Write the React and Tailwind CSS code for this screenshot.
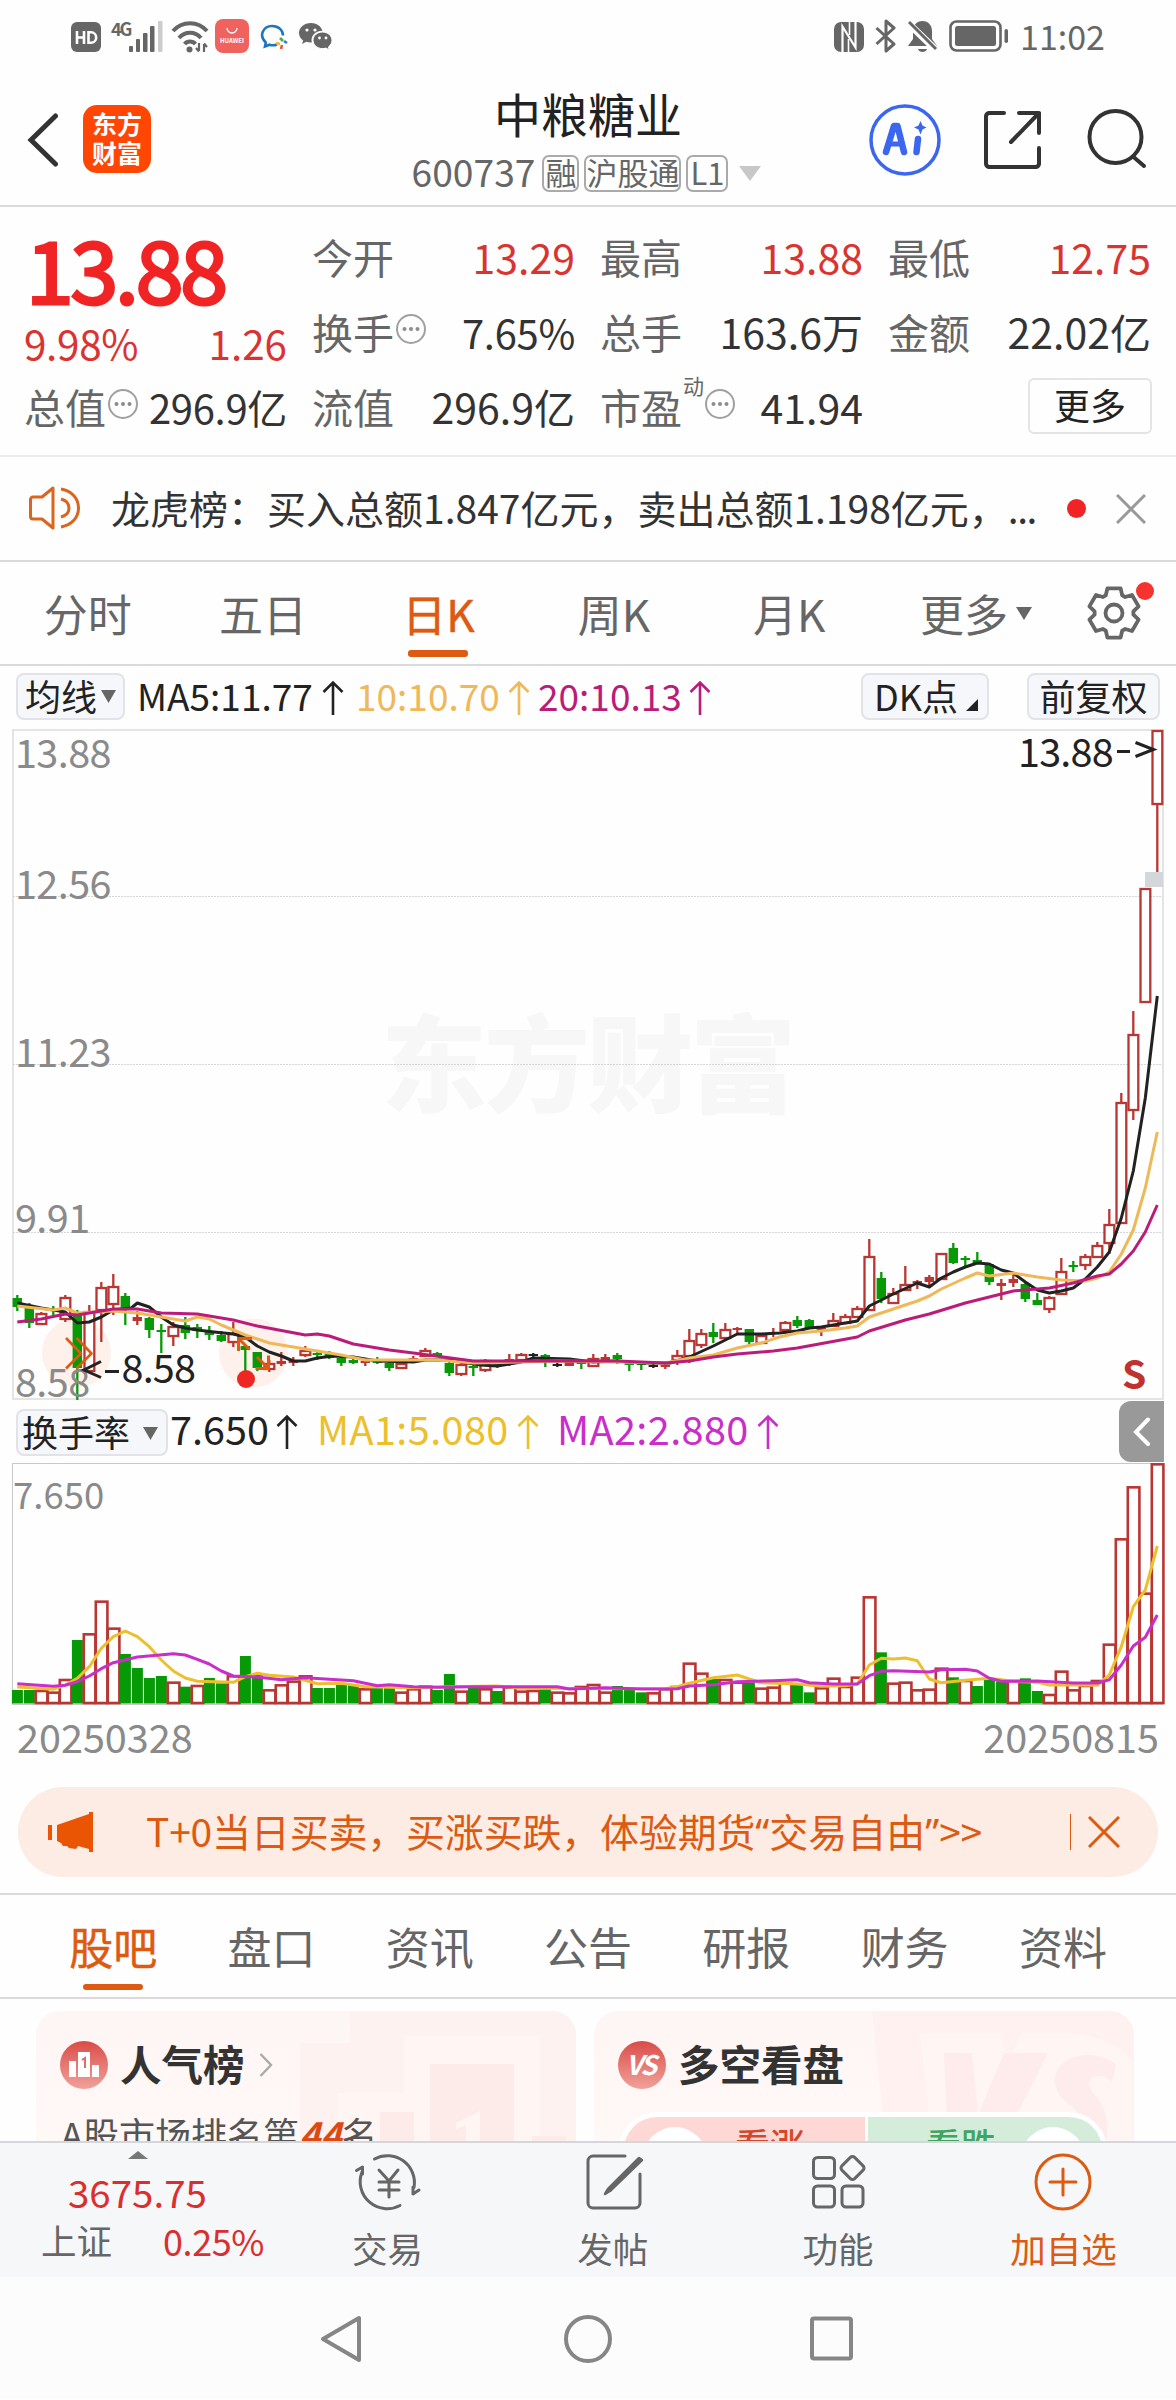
import React from "react";

const RED = "#b93632";
const GREEN = "#069a06";
const INK = "#222222";

/* ---------- price series: [kind, high, bodyTop, bodyBottom, low] ---------- */
/* kinds: g = falling, r = rising (hollow), f = rising (filled), k = unchanged */
const CANDLES = [
  ["g",1295,1298,1307,1311],["g",1303,1307,1323,1328],["r",1312,1313,1324,1325],["g",1306,1309,1311,1317],["r",1295,1297,1319,1322],
  ["g",1310,1315,1368,1400],["r",1305,1311,1371,1371],["r",1282,1287,1310,1342],["r",1274,1286,1304,1315],["g",1293,1296,1309,1325],
  ["f",1311,1317,1321,1325],["g",1317,1318,1330,1338],["g",1324,1330,1332,1353],["r",1322,1326,1336,1346],["g",1317,1325,1333,1339],
  ["g",1324,1327,1331,1338],["g",1326,1332,1335,1340],["g",1331,1335,1341,1342],["r",1322,1333,1342,1347],["g",1346,1346,1350,1377],
  ["g",1352,1352,1368,1371],["r",1360,1363,1369,1372],["f",1352,1361,1364,1366],["f",1357,1360,1363,1366],["r",1346,1350,1355,1357],
  ["g",1352,1353,1355,1360],["g",1351,1354,1358,1359],["g",1355,1358,1363,1366],["g",1357,1360,1363,1364],["f",1358,1361,1363,1366],
  ["g",1357,1359,1363,1364],["g",1362,1363,1368,1371],["r",1362,1363,1368,1369],["f",1356,1358,1360,1362],["r",1348,1350,1356,1357],
  ["g",1352,1353,1357,1357],["g",1362,1363,1373,1376],["r",1363,1364,1374,1376],["g",1363,1366,1368,1376],["r",1359,1360,1370,1372],
  ["g",1363,1364,1366,1368],["f",1354,1359,1361,1366],["r",1353,1354,1360,1360],["k",1353,1354,1355,1358],["g",1354,1355,1360,1367],
  ["k",1363,1364,1366,1367],["f",1362,1362,1366,1366],["g",1362,1362,1364,1369],["r",1354,1358,1366,1367],["f",1354,1357,1360,1361],
  ["g",1353,1355,1359,1364],["g",1363,1363,1365,1371],["g",1363,1363,1365,1370],["k",1364,1365,1367,1368],["f",1364,1365,1367,1369],
  ["r",1350,1355,1360,1365],["r",1329,1340,1356,1363],["r",1329,1333,1345,1348],["g",1323,1332,1337,1343],["r",1323,1329,1338,1339],
  ["f",1327,1328,1330,1333],["g",1329,1329,1342,1345],["r",1334,1335,1343,1343],["f",1328,1332,1334,1337],["r",1321,1322,1330,1331],
  ["g",1316,1320,1326,1328],["g",1319,1320,1328,1328],["f",1327,1328,1330,1336],["r",1313,1320,1326,1327],["r",1314,1316,1323,1324],
  ["r",1306,1308,1317,1317],["r",1239,1256,1310,1311],["g",1272,1278,1299,1303],["r",1288,1293,1303,1304],["r",1266,1284,1290,1290],
  ["f",1280,1281,1283,1289],["f",1275,1277,1282,1286],["r",1253,1253,1279,1279],["g",1243,1248,1263,1264],["g",1256,1258,1260,1266],
  ["g",1252,1260,1263,1263],["g",1263,1264,1282,1285],["f",1279,1283,1286,1300],["f",1275,1279,1283,1287],["g",1283,1284,1299,1302],
  ["g",1293,1300,1305,1305],["r",1296,1297,1309,1313],["r",1258,1271,1294,1295],["g",1261,1265,1267,1272],["r",1254,1256,1265,1270],
  ["r",1242,1245,1257,1258],["r",1209,1224,1243,1254],["r",1093,1102,1223,1223],["r",1011,1034,1110,1120],["r",888,888,1002,1002],
  ["r",730,730,804,872],
];

const MA5 = [[0,1303],[2,1308],[3,1310],[4,1312],[5,1323],[6,1322],[7,1317],[8,1310],[9.5,1308],[10,1303],[11,1307],[12,1317],[13,1325],[14,1328],[15,1330],[16.4,1332],[18,1334],[19,1337],[20,1346],[21,1352],[22,1356],[23,1361],[24,1361],[25,1358],[26.3,1356],[28,1357],[30,1361],[33,1362],[34,1360],[36,1360],[37,1362],[38.6,1365],[40,1366],[42,1362],[43,1358],[46,1359],[48,1362],[50,1361],[52,1363],[54.4,1363],[56,1357],[58,1346],[60,1334],[62,1334],[63.5,1333],[65,1331],[66,1328],[67,1327],[68,1325],[69,1323],[70,1321],[71,1306],[73,1294],[75,1283],[76,1287],[77,1278],[78,1272],[79,1267],[80,1263],[81,1264],[82,1270],[83,1273],[84,1282],[85,1290],[86,1293],[87,1291],[88,1288],[89,1279],[90,1267],[91,1252],[92,1218],[93,1171],[94,1098],[95,996]];
const MA10 = [[0,1306],[3,1310],[4,1308],[5,1313],[8,1311],[10,1313],[12,1317],[14,1321],[15,1317],[16,1319],[17,1325],[19,1335],[21,1343],[23,1347],[25,1351],[27,1355],[29,1360],[35,1360],[38,1363],[42,1362],[45,1361],[50,1362],[54,1363],[56,1358],[58,1355],[60,1348],[62,1343],[63.5,1337],[65,1333],[67,1331],[69,1328],[70,1326],[71,1317],[73,1309],[75,1301],[76,1296],[77,1289],[79,1278],[80,1273],[81,1276],[83,1273],[85,1277],[87,1280],[89,1281],[90,1278],[91,1272],[92,1254],[93,1230],[94,1188],[95,1132]];
const MA20 = [[0,1322],[2,1319],[4,1314],[5,1315],[7,1311],[8,1309],[10,1309],[12,1313],[15,1314],[18,1320],[20,1326],[24,1335],[25,1334],[26,1336],[28,1344],[31,1350],[33,1353],[38,1361],[50,1361],[54,1363],[56,1361],[58,1357],[60,1354],[63,1351],[65,1348],[70,1337],[71,1331],[74,1320],[76,1314],[79,1303],[81,1297],[83,1291],[86,1288],[88,1283],[90,1276],[91,1274],[92,1264],[93,1251],[94,1232],[95,1205]];

/* ---------- turnover series, y in thirds of a pixel ---------- */
const BARS = "g750 g750 r750 r755 r717 g600 r580 r482 r563 g642 g684 g714 g708 r725 g740 r735 g714 g730 r706 g648 g705 r748 r733 r722 r706 g744 g744 g735 g735 r745 g742 g742 r755 r745 r737 g750 g702 r752 g742 r745 g753 r740 r752 r750 g738 r755 r757 r738 r732 r755 g738 g748 g757 r757 r745 r738 r668 r698 g717 r717 r725 g727 r743 r740 r728 g730 g757 r742 r713 r738 r710 r469 g637 r728 r725 r748 r746 r683 g712 r720 g738 g715 g725 r720 g715 g753 r762 r692 r748 r735 r720 r611 r295 r139 r458 r70"
  .split(" ")
  .map((s) => [s[0], Number(s.slice(1)) / 3 + 1440]);
const VMA1 = [[0,741],[3,748],[4,735],[5,715],[6,680],[7,625],[8,590],[9,573],[10,590],[11,620],[12,660],[13,693],[14,714],[15,724],[18,727],[19,710],[20,700],[21,706],[23,711],[25,731],[27,730],[29,740],[33,743],[36,740],[40,738],[42,745],[54,746],[55,740],[56,730],[58,713],[60,705],[61,717],[62,728],[65,732],[67,739],[69,737],[70,732],[71,675],[72,655],[73,657],[74,654],[75,662],[76,717],[77,728],[79,721],[81,715],[83,724],[85,727],[86,735],[88,735],[90,736],[91,705],[92,620],[93,500],[94,450],[95,318]];
const VMA2 = [[0,731],[3,739],[4,736],[5,725],[6,708],[7,686],[8,668],[10,651],[13,641],[14,645],[15,658],[16,672],[17,693],[18,708],[20,711],[22,719],[24,713],[26,718],[28,722],[30,737],[31,734],[33,740],[35,742],[38,740],[45,740],[46,747],[49,743],[52,747],[55,746],[56,738],[58,734],[60,725],[63,722],[65,719],[66,728],[68,732],[70,732],[71,707],[72,694],[73,692],[76,696],[77,689],[79,688],[80,693],[81,715],[82,724],[85,723],[88,729],[90,729],[91,719],[92,675],[93,618],[94,592],[95,525]];

const cx = (i) => 17.3 + 12 * i;
const line = (pts) => pts.map(([i, y]) => `${cx(i).toFixed(1)},${y}`).join(" ");
const vline = (pts) => line(pts.map(([i, v]) => [i, (1440 + v / 3).toFixed(1)]));

function PriceChart() {
  return (
    <svg width="1176" height="672" viewBox="0 729 1176 672" className="block shrink-0">
      <rect x="13" y="730" width="1150" height="669" fill="none" stroke="#e4e4e4" strokeWidth="2" />
      <text x="381" y="1104" fontSize="106" fontWeight="900" fill="#f7f7f7" textLength="415">东方财富</text>
      {[896.5, 1064.5, 1232.5].map((y) => (
        <line key={y} x1="13" x2="1163" y1={y} y2={y} stroke="#d6d6d6" strokeWidth="1" strokeDasharray="2 1" />
      ))}
      <circle cx="76.500" cy="1353" r="34.500" fill="#fef0ea" />
      <circle cx="253.500" cy="1353" r="34.500" fill="#fef0ea" />
      {CANDLES.map(([k, hi, t, b, lo], i) => {
        const x = cx(i);
        const c = k === "g" ? GREEN : k === "k" ? INK : RED;
        const hollow = k === "r" && b - t > 3;
        return (
          <g key={i}>
            {hi < t && <line x1={x} x2={x} y1={hi} y2={t} stroke={c} strokeWidth="2.300" />}
            {lo > b && <line x1={x} x2={x} y1={b} y2={lo} stroke={c} strokeWidth="2.300" />}
            {hollow ? (
              <rect x={x - 4.8} y={t + 1} width="9.800" height={b - t - 1} fill="#fff" stroke={c} strokeWidth="2.300" />
            ) : (
              <rect x={x - 4.7} y={t} width="9.400" height={Math.max(b - t, 2)} fill={c} />
            )}
          </g>
        );
      })}
      <rect x="1145" y="872" width="18" height="15" fill="#d3d7dc" />
      <g fill="none" strokeWidth="3" strokeLinejoin="round">
        <polyline points={line(MA5)} stroke={INK} />
        <polyline points={line(MA10)} stroke="#efb858" />
        <polyline points={line(MA20)} stroke="#bb1c79" />
        <g stroke="#dd5a12" strokeWidth="2.600">
          <path d="M66 1338l15 15.500-15 15M76.500 1338l15 15.500-15 15" />
          <path d="M249.500 1349.500L239 1339M238.500 1351v-12.500h13.500M257 1357l11 11M268.500 1355.500v13h-13" strokeWidth="3" />
        </g>
      </g>
      <circle cx="246" cy="1379" r="9" fill="#ee2722" />
      <g fontSize="39.600" fill="#8a8a8a" letterSpacing="-0.600">
        <text x="15" y="768">13.88</text>
        <text x="15" y="899">12.56</text>
        <text x="15" y="1067">11.23</text>
        <text x="15" y="1233">9.91</text>
        <text x="15" y="1397">8.58</text>
      </g>
      <g fontSize="39.600" fill={INK} letterSpacing="-0.800">
        <text x="1018" y="767">13.88</text>
        <text x="121.500" y="1383">8.58</text>
        <path d="M1117 751.500h13M1135.500 742.500l18 7-18 7M105 1371.500h14M101 1361.500l-17 8.500 17 7.500" fill="none" stroke={INK} strokeWidth="3" />
      </g>
      <text x="1122" y="1389" fontSize="39" fontWeight="600" fill="#bf322f">S</text>
    </svg>
  );
}

function TurnoverChart() {
  return (
    <svg width="1176" height="243" viewBox="0 1463 1176 243" className="block shrink-0">
      <rect x="12.500" y="1463.500" width="1150.500" height="241" fill="none" stroke="#c9c9c9" strokeWidth="1" />
      {BARS.map(([k, y], i) =>
        k === "g" ? (
          <rect key={i} x={cx(i) - 5.4} y={y} width="11" height={1703.5 - y} fill={GREEN} />
        ) : (
          <rect key={i} x={cx(i) - 5.5} y={y + 1} width="11.600" height={1702 - y} fill="#fff" stroke={RED} strokeWidth="2.600" />
        )
      )}
      <g fill="none" strokeWidth="3" strokeLinejoin="round">
        <polyline points={vline(VMA1)} stroke="#ecc02c" />
        <polyline points={vline(VMA2)} stroke="#c92ecb" />
      </g>
      <text x="13" y="1509" fontSize="36.500" fill="#8a8a8a">7.650</text>
    </svg>
  );
}

const UpArrow = ({ className }) => (
  <svg width="22" height="36" viewBox="0 0 22 36" fill="none" stroke="currentColor" strokeWidth="2.600" className={className}>
    <path d="M11 35V3M1.500 12L11 2.500 20.500 12" />
  </svg>
);

const Down = ({ w, h, color, className }) => (
  <svg width={w} height={h} viewBox="0 0 10 10" preserveAspectRatio="none" className={className}>
    <path d="M0 0h10L5 10z" fill={color} />
  </svg>
);

const Info = ({ className }) => (
  <svg width="32" height="32" viewBox="0 0 32 32" className={className}>
    <circle cx="16" cy="16" r="14" fill="none" stroke="#a0a0a0" strokeWidth="2" />
    <g fill="#8c8c8c">
      <circle cx="9.500" cy="16" r="2" />
      <circle cx="16" cy="16" r="2" />
      <circle cx="22.500" cy="16" r="2" />
    </g>
  </svg>
);

function StatusBar() {
  return (
    <div className="flex h-[75px] items-start pl-[71px] pt-[19px] text-[#666]">
      <svg width="30" height="30" viewBox="0 0 30 30" className="mt-[3px]">
        <rect width="30" height="30" rx="6" fill="#666" />
        <path d="M6 9v13M13 9v13M6 15.500h7M17.500 10.300h2.500a5.200 5.200 0 0 1 0 10.400h-2.500z" fill="none" stroke="#fff" strokeWidth="2.600" />
      </svg>
      <div className="ml-[10px] mt-[-1px] w-[19px] text-[18px] font-bold leading-[20px] tracking-[-2px] whitespace-nowrap">4G</div>
      <svg width="34" height="31" viewBox="0 0 34 31" className="ml-[-1px] mt-[2px]">
        <g fill="#666">
          <rect x="0" y="25" width="4" height="6" rx="1" />
          <rect x="7" y="18" width="4" height="13" rx="1" />
          <rect x="14" y="12" width="4.500" height="19" rx="1" />
          <rect x="21" y="5" width="4.500" height="26" rx="1" />
          <rect x="29" y="0" width="4.500" height="31" rx="1" fill="#ccc" />
        </g>
      </svg>
      <svg width="38" height="33" viewBox="0 0 38 33" className="ml-[8px] mt-[1px]" fill="none" stroke="#666" strokeWidth="4">
        <path d="M2 11c9-10.500 25-10.500 34 0M8 18c6-7 16-7 22 0M13.500 24c3-3.500 8-3.500 11 0" />
        <circle cx="18.500" cy="29.500" r="3" fill="#666" stroke="none" />
        <path d="M28 23v8M25 28l3 3.500M33 32v-8M36 27l-3-3.500" strokeWidth="2.200" />
      </svg>
      <div className="ml-[6px] flex h-[34px] w-[34px] flex-col items-center justify-center rounded-[8px] bg-[#ef625e]">
        <svg width="12" height="8" viewBox="0 0 12 8" className="mb-[2px]" fill="none" stroke="#fff" strokeWidth="1.300"><path d="M1 1a5 5 0 0 0 10 0" /></svg>
        <span className="text-[6px] font-bold leading-[8px] text-white">HUAWEI</span>
      </div>
      <svg width="28" height="26" viewBox="0 0 28 26" className="ml-[11px] mt-[5px]" fill="none" strokeWidth="2.600">
        <path d="M17 20.500c-2 .8-5 1-7.500.2L5 22.500l.8-4C-1.500 12 3 2 12 2c7 0 11 4.500 11 9.500" stroke="#1f76bd" />
        <path d="M20 14l3 3" stroke="#45b04a" />
        <path d="M24 17l3 2" stroke="#2f80d0" />
        <path d="M21 25l1-4" stroke="#e9562f" />
        <path d="M16 19l4 1" stroke="#f4b821" />
      </svg>
      <svg width="33" height="27" viewBox="0 0 33 27" className="ml-[11px] mt-[4px]">
        <path d="M12 0C5 0 0 4.600 0 10c0 3 1.600 5.700 4.200 7.500L3 21l4.300-2.200c1.500.4 3 .6 4.700.6h.8C11.500 13 16 8 23.500 7.800 22.200 3.200 17.500 0 12 0z" fill="#666" />
        <path d="M33 17.300c0-4.700-4.300-8.300-9.500-8.300S14 12.600 14 17.300s4.300 8.300 9.500 8.300c1.200 0 2.400-.2 3.500-.5l3.300 1.900-.9-3c2.200-1.600 3.600-4 3.600-6.700z" fill="#666" stroke="#fff" strokeWidth="1" />
        <g fill="#fff"><circle cx="8" cy="7" r="1.600" /><circle cx="16" cy="7" r="1.600" /><circle cx="20.500" cy="15" r="1.400" /><circle cx="27" cy="15" r="1.400" /></g>
      </svg>
      <div className="flex-1" />
      <svg width="30" height="30" viewBox="0 0 30 30" className="mt-[3px]">
        <rect width="30" height="30" rx="7" fill="#666" />
        <path d="M8.500 30V4.500L21.500 25.500V0" fill="none" stroke="#fff" strokeWidth="2.200" />
        <path d="M14.500 30V17M15.500 0v13" fill="none" stroke="#fff" strokeWidth="1.600" />
      </svg>
      <svg width="22" height="34" viewBox="0 0 22 34" className="ml-[11px]" fill="none" stroke="#666" strokeWidth="3">
        <path d="M1.500 9L19 25l-8 7V2l8 7L1.500 25" strokeLinejoin="round" />
      </svg>
      <svg width="31" height="33" viewBox="0 0 31 33" className="ml-[10px] mt-[1px]">
        <path d="M15.500 1c6 0 9.500 4.500 9.500 10v8l5 7H1l5-7v-8c0-5.500 3.500-10 9.500-10zM11 29h9c-1 4-8 4-9 0z" fill="#666" />
        <path d="M-1 1L30 31" stroke="#fff" strokeWidth="7" />
        <path d="M2 2L29 29" stroke="#666" strokeWidth="3" />
      </svg>
      <svg width="60" height="33" viewBox="0 0 60 33" className="ml-[11px] mt-[1px]">
        <rect x="1.500" y="1.500" width="50" height="29" rx="6" fill="none" stroke="#666" strokeWidth="2.600" />
        <rect x="6" y="6" width="41" height="20" rx="2.500" fill="#666" />
        <rect x="55.500" y="9" width="3.500" height="14" rx="1.700" fill="#666" />
      </svg>
      <div className="mr-[71px] ml-[11px] text-[34px] leading-[34px] whitespace-nowrap">11:02</div>
    </div>
  );
}

const Tag = ({ children, className }) => (
  <span className={`flex h-[37px] items-center justify-center rounded-[7px] border-2 border-[#aaa] pb-[4px] text-[31px] leading-none text-[#666] ${className}`}>{children}</span>
);

function Header() {
  return (
    <header className="grid h-[132px] grid-cols-[1fr_auto_1fr] border-b-2 border-[#dadada]">
      <div className="flex items-start">
        <svg width="32" height="54" viewBox="0 0 32 54" className="ml-[27px] mt-[38px]" fill="none" stroke="#333" strokeWidth="5" strokeLinecap="round">
          <path d="M28.500 3L4 27l24.500 24" />
        </svg>
        <div className="ml-[24px] mt-[30px] flex h-[68px] w-[68px] flex-col items-center justify-center rounded-[14px] bg-[#ff4604] pb-[3px] text-[25px] font-bold leading-[29px] text-white">
          <span>东方</span>
          <span>财富</span>
        </div>
      </div>
      <div className="flex flex-col items-center">
        <h1 className="mt-[12px] text-[47px] leading-[52px] text-[#222]">中粮糖业</h1>
        <div className="mt-[16px] mr-[3px] flex h-[37px] items-center">
          <span className="mt-[-4px] text-[37.2px] leading-none text-[#666]">600737</span>
          <Tag className="ml-[7px] w-[37px]">融</Tag>
          <Tag className="ml-[5px] w-[97px]">沪股通</Tag>
          <Tag className="ml-[5px] w-[42px]">L1</Tag>
          <Down w="22" h="15" color="#c8c8c8" className="ml-[11px]" />
        </div>
      </div>
      <div className="flex items-start justify-end pr-[29px]">
        <svg width="72" height="72" viewBox="0 0 72 72" className="mt-[29px]" fill="none" stroke="#3a66f0">
          <circle cx="36" cy="36" r="34" strokeWidth="3.500" />
          <g strokeLinecap="round" strokeLinejoin="round" strokeWidth="6.500">
            <path d="M17 48L25 22h3.500L35 48" />
            <path d="M21.500 40h11" strokeWidth="5" />
            <path d="M49 35l-1.500 13" />
          </g>
          <path d="M51.500 17l2 4.500 4 2-4 2-2 5-2-5-4.500-2 4.500-2z" fill="#3a66f0" stroke="none" />
        </svg>
        <svg width="60" height="60" viewBox="0 0 60 60" className="ml-[42px] mr-[1px] mt-[35px]" fill="none" stroke="#333" strokeWidth="4" strokeLinecap="round" strokeLinejoin="round">
          <path d="M21 3H6a4 4 0 0 0-3 3v48a4 4 0 0 0 3 3h47a4 4 0 0 0 3-3V38M36 3h20v20M56 3L28 32" />
        </svg>
        <svg width="60" height="62" viewBox="0 0 60 62" className="ml-[43px] mt-[33px]" fill="none" stroke="#333" strokeWidth="4" strokeLinecap="round">
          <circle cx="28.500" cy="29" r="26" />
          <path d="M46 48.500l11 9.500" />
        </svg>
      </div>
    </header>
  );
}

const Cell = ({ label, extra, value, red, tight }) => (
  <div className="flex h-[75px] w-[263px] items-center whitespace-nowrap text-[41px] leading-none">
    <span className="text-[#666]">{label}</span>
    {extra}
    <span className={`ml-auto ${red ? "text-[#d93431]" : "text-[#333]"} ${tight ? "text-[40px] tracking-[-0.3px]" : ""}`}>{value}</span>
  </div>
);

function Stats() {
  const info = <Info className="ml-[1px] mt-[-6px]" />;
  return (
    <section className="flex h-[250px] gap-[25px] border-b-2 border-[#ececec] pl-[24px] pt-[12px]">
      <div className="w-[263px]">
        <div className="h-[96px] pl-[2px] pt-[5px] text-[86px] leading-[86px] tracking-[-3.2px] text-[#f02424] [-webkit-text-stroke:3px_#f02424]">13.88</div>
        <div className="flex h-[54px] items-center justify-between pt-[3px] text-[40.4px] leading-none text-[#d93431]">
          <span className="tracking-[-0.3px]">9.98%</span>
          <span>1.26</span>
        </div>
        <Cell label="总值" extra={info} value="296.9亿" tight />
      </div>
      <div>
        <Cell label="今开" value="13.29" red />
        <Cell label="换手" extra={info} value="7.65%" tight />
        <Cell label="流值" value="296.9亿" />
      </div>
      <div>
        <Cell label="最高" value="13.88" red />
        <Cell label="总手" value="163.6万" />
        <Cell
          label="市盈"
          extra={
            <>
              <span className="mt-[-42px] ml-[1px] text-[21px] text-[#666]">动</span>
              <Info className="mt-[-6px]" />
            </>
          }
          value="41.94"
        />
      </div>
      <div>
        <Cell label="最低" value="12.75" red />
        <Cell label="金额" value="22.02亿" />
        <div className="ml-[140px] mt-[9px] flex h-[56px] w-[124px] items-center justify-center rounded-[6px] border-2 border-[#e4e4e4] pb-[4px] text-[36px] leading-none text-[#222]">更多</div>
      </div>
    </section>
  );
}

function Notice() {
  return (
    <section className="flex h-[105px] items-center border-b-2 border-[#dadada]">
      <svg width="52" height="46" viewBox="0 0 52 46" className="ml-[29px] mt-[-1px]" fill="none" stroke="#d9661f" strokeWidth="3">
        <path d="M24 3v40L13 34H4a2.500 2.500 0 0 1-2.500-2.500v-17A2.500 2.500 0 0 1 4 12h9z" strokeLinejoin="round" />
        <path d="M32 14c5.500 1.500 8 5 8 9s-2.500 7.500-8 9M32 4c11 2 17.500 9.500 17.500 19S43 40 32 42" />
      </svg>
      <div className="ml-[30px] mt-[-3px] w-[924px] whitespace-nowrap text-[39px] leading-none text-[#333]">龙虎榜：买入总额1.847亿元，卖出总额1.198亿元，<span className="tracking-[-1.5px]">...</span></div>
      <div className="ml-[32px] h-[19px] w-[19px] rounded-full bg-[#f02424]" />
      <svg width="30" height="30" viewBox="0 0 30 30" className="ml-[30px]" stroke="#999" strokeWidth="3"><path d="M1 1l28 28M29 1L1 29" /></svg>
    </section>
  );
}

const gear = Array.from({ length: 6 }, (_, k) =>
  [[-25, 19.5], [-15, 25.5], [15, 25.5], [25, 19.5]].map(([d, r]) => {
    const a = ((k * 60 - 90 + d) * Math.PI) / 180;
    return `${(28 + r * Math.cos(a)).toFixed(1)},${(28 + r * Math.sin(a)).toFixed(1)}`;
  }).join(" ")
).join(" ");

function PeriodTabs() {
  const tabs = ["分时", "五日", "日K", "周K", "月K"];
  return (
    <nav className="flex h-[104px] border-b-2 border-[#dadada] text-[44px] leading-[54px] text-[#666]">
      {tabs.map((t) => (
        <div key={t} className={`flex w-[175.4px] flex-col items-center pt-[24px] ${t === "日K" ? "text-[#dd5a12] [-webkit-text-stroke:0.5px_#dd5a12]" : ""}`}>
          {t}
          {t === "日K" && <div className="mt-[10px] h-[7px] w-[60px] rounded-[3px] bg-[#dd5a12]" />}
        </div>
      ))}
      <div className="flex pl-[43px] pt-[24px]">
        更多
        <Down w="16" h="13" color="#666" className="ml-[8px] mt-[21px]" />
      </div>
      <div className="relative ml-[54px] mt-[23px] h-[56px] w-[56px]">
        <svg width="56" height="56" viewBox="0 0 56 56" fill="none" stroke="#666" strokeWidth="3.800" strokeLinejoin="round">
          <polygon points={gear} />
          <circle cx="28" cy="28" r="8.500" />
        </svg>
        <span className="absolute left-[50px] top-[-3px] h-[18px] w-[18px] rounded-full bg-[#f5332f]" />
      </div>
    </nav>
  );
}

const Chip = ({ className, children }) => (
  <div className={`flex h-[47px] items-center rounded-[8px] border-2 border-[#e1e3e8] bg-[#f6f7fa] pb-[4px] text-[36px] leading-none text-[#222] ${className}`}>{children}</div>
);

function PriceLegend() {
  return (
    <div className="flex h-[63px] items-start whitespace-nowrap pl-[16px] pt-[7px] text-[37px] leading-[44px]">
      <Chip className="w-[109px] pl-[7px]">
        均线
        <Down w="15" h="13" color="#666" className="ml-[4px] mt-[4px]" />
      </Chip>
      <div className="ml-[12px] flex w-[219px] text-[#222]">MA5:11.77<UpArrow className="ml-[9px] mt-[7px]" /></div>
      <div className="flex w-[182px] text-[#efb858]">10:10.70<UpArrow className="ml-[8px] mt-[7px]" /></div>
      <div className="flex text-[#bb1c79]">20:10.13<UpArrow className="ml-[7px] mt-[7px]" /></div>
      <Chip className="ml-auto w-[128px] pl-[11px]">
        DK点
        <svg width="12" height="12" viewBox="0 0 12 12" className="ml-[8px] mt-[21px]"><path d="M12 0v12H0z" fill="#222" /></svg>
      </Chip>
      <Chip className="ml-[38px] mr-[16px] w-[133px] justify-center">前复权</Chip>
    </div>
  );
}

function TurnoverLegend() {
  return (
    <div className="flex h-[62px] items-start whitespace-nowrap pl-[16px] text-[39.6px] leading-[46px]">
      <Chip className="mt-[8px] w-[152px] pl-[4px]">
        换手率
        <Down w="15" h="13" color="#666" className="ml-[13px] mt-[5px]" />
      </Chip>
      <div className="ml-[2px] mt-[4px] flex w-[147px] text-[#222]">7.650<UpArrow className="ml-[7px] mt-[9px]" /></div>
      <div className="mt-[4px] flex w-[240px] tracking-[0.4px] text-[#ecc02c]">MA1:5.080<UpArrow className="ml-[8px] mt-[9px]" /></div>
      <div className="mt-[4px] flex tracking-[0.4px] text-[#c92ecb]">MA2:2.880<UpArrow className="ml-[8px] mt-[9px]" /></div>
      <div className="ml-auto mr-[12px] flex h-[61px] w-[45px] items-center justify-center rounded-l-[12px] bg-[#999]">
        <svg width="18" height="30" viewBox="0 0 18 30" fill="none" stroke="#fff" strokeWidth="4" strokeLinecap="round"><path d="M15 2.500L3 15l12 12" /></svg>
      </div>
    </div>
  );
}

function Promo() {
  return (
    <div className="mx-[18px] flex h-[90px] items-center rounded-[45px] bg-[#fcece3] text-[#dd5a12]">
      <svg width="46" height="40" viewBox="0 0 46 40" className="ml-[30px]" fill="#ea5504">
        <path d="M0 13h4v15H0zM9 13L41 2V0h4v40h-4v-3l-11-3-2 3-7-1-2-2h-4l-2-3-4-2z" />
      </svg>
      <div className="ml-[52px] mt-[-4px] flex w-[849px] whitespace-nowrap text-[39px] leading-none">
        <span className="tracking-[-0.2px]">T+0当日买卖，买涨买跌，体验期货</span>
        <span className="font-['Noto_Sans']">“</span>
        <span>交易自由</span>
        <span className="font-['Noto_Sans']">”</span>
        <span className="tracking-[-0.5px]">&gt;&gt;</span>
      </div>
      <div className="ml-[75px] h-[36px] w-[1px] bg-[#dd5a12]" />
      <svg width="32" height="32" viewBox="0 0 32 32" className="ml-[17px]" stroke="#dd5a12" strokeWidth="3"><path d="M1 1l30 30M31 1L1 31" /></svg>
    </div>
  );
}

function SectionTabs() {
  const tabs = ["股吧", "盘口", "资讯", "公告", "研报", "财务", "资料"];
  return (
    <nav className="mt-[16px] flex h-[106px] border-y-2 border-[#dadada] pl-[34px] text-[44px] leading-[54px] text-[#666]">
      {tabs.map((t, i) => (
        <div key={t} className={`flex w-[158.3px] flex-col items-center pt-[24px] ${i === 0 ? "text-[#dd5a12] [-webkit-text-stroke:0.5px_#dd5a12]" : ""}`}>
          {t}
          {i === 0 && <div className="mt-[11px] h-[6px] w-[60px] rounded-[3px] bg-[#dd5a12]" />}
        </div>
      ))}
    </nav>
  );
}

const Badge = ({ children }) => (
  <span className="flex h-[48px] w-[48px] items-center justify-center rounded-full bg-gradient-to-b from-[#d94a48] to-[#f0a09b] text-white">{children}</span>
);

function Cards() {
  return (
    <section className="flex h-[142px] gap-[18px] overflow-hidden pl-[36px] pt-[12px]">
      <div className="relative h-[240px] w-[540px] overflow-hidden rounded-[24px] bg-gradient-to-b from-[#fef6f4] to-[#fffaf8]">
        <svg width="540" height="133" viewBox="0 0 540 133" className="absolute left-0 top-0">
          <path d="M314 0h226v133H264V32h50z" fill="#fef2f0" />
          <path d="M368 24h136v109H302V82h66z" fill="#fff5f3" />
          <path d="M394 53h84v80h-84zM344 101h34v32h-34zM496 125h34v8h-34z" fill="#fdebea" />
          <path d="M420 112l24-12v33h-14v-19l-10 4z" fill="#fff6f4" />
        </svg>
        <div className="relative flex h-[48px] items-center pl-[24px] mt-[30px]">
          <Badge>
            <svg width="30" height="26" viewBox="0 0 30 26" fill="#fff">
              <path d="M0 9h7v16H0zM9 0h12v25H9zM23 13h7v12h-7z" />
              <path d="M13 8l3-2v10" fill="none" stroke="#df6c68" strokeWidth="2" />
            </svg>
          </Badge>
          <span className="ml-[12px] mt-[-3px] text-[41.5px] font-bold leading-none text-[#333]">人气榜</span>
          <svg width="14" height="24" viewBox="0 0 14 24" className="ml-[14px]" fill="none" stroke="#aaa" strokeWidth="2.400"><path d="M1.500 1L12 12 1.500 23" /></svg>
        </div>
        <div className="relative mt-[24px] whitespace-nowrap pl-[25px] text-[36px] leading-[40px] text-[#555]">
          A股市场排名第<span className="font-bold italic text-[#dc4a14]">44</span>名
        </div>
      </div>
      <div className="relative h-[240px] w-[540px] overflow-hidden rounded-[24px] bg-gradient-to-b from-[#fef6f4] to-[#fffaf8]">
        <svg width="540" height="133" viewBox="0 0 540 133" className="absolute left-0 top-0">
          <path d="M278 0h262v133H292z" fill="#fef1ef" />
          <path d="M326 22h80l8 26 14-26h44c30 0 52 14 66 26v85H338z" fill="#fff5f3" />
          <path d="M350 42h28l6 62 26-62h44l-46 91h-54z" fill="#fdeceb" />
          <path d="M522 54c-14-14-46-14-58 4-8 14 0 28 12 36 10 6 14 20 10 39h26c4-26-2-40-12-50-8-8-6-18 4-18 6 0 10 2 14 6z" fill="#fdeceb" />
        </svg>
        <div className="relative flex h-[48px] items-center pl-[24px] mt-[30px]">
          <Badge><span className="text-[27px] font-bold italic leading-none tracking-[-2px] mt-[-3px] mr-[3px]">VS</span></Badge>
          <span className="ml-[12px] mt-[-3px] text-[41.5px] font-bold leading-none text-[#333]">多空看盘</span>
        </div>
        <div className="relative ml-[25px] mt-[23px] flex h-[76px] w-[488px] rounded-[40px] border-[5px] border-white bg-white text-[35px] font-medium leading-[52px]">
          <div className="flex w-[241px] rounded-l-[36px] bg-[#fdd8d5] text-[#d0492c]">
            <span className="ml-[19px] mt-[10px] h-[64px] w-[64px] rounded-full bg-white" />
            <span className="ml-[28px] mt-[1px]">看涨</span>
          </div>
          <div className="ml-[3px] flex w-[234px] justify-end rounded-r-[36px] bg-[#d4eddb] text-[#3fa560]">
            <span className="mr-[25px] mt-[1px]">看跌</span>
            <span className="mr-[17px] mt-[10px] h-[64px] w-[64px] rounded-full bg-white" />
          </div>
        </div>
      </div>
    </section>
  );
}

const Action = ({ label, orange, children }) => (
  <div className={`flex w-[225.300px] flex-col items-center pt-[5px] ${orange ? "text-[#dd5a12]" : "text-[#666]"}`}>
    <svg width="68" height="68" viewBox="0 0 68 68" fill="none" stroke="currentColor" strokeWidth="3" strokeLinecap="round" strokeLinejoin="round">{children}</svg>
    <span className="mt-[12px] text-[35.5px] leading-[40px]">{label}</span>
  </div>
);

function BottomBar() {
  return (
    <footer className="flex h-[136px] border-t-2 border-[#d4d6da] bg-[#f6f7f9]">
      <div className="w-[275px] whitespace-nowrap text-[#d92f2f]">
        <svg width="20" height="8" viewBox="0 0 20 8" className="ml-[128px] mt-[8px] block"><path d="M10 0l10 8H0z" fill="#777" /></svg>
        <div className="ml-[68px] mt-[12px] text-[38.5px] leading-[40px]">3675.75</div>
        <div className="ml-[41px] mt-[9px] flex text-[36px] leading-[40px]">
          <span className="w-[122px] text-[35.5px] text-[#666]">上证</span>
          <span className="tracking-[-0.4px]">0.25%</span>
        </div>
      </div>
      <Action label="交易">
        <path d="M20.500 11A27 27 0 0 1 60 39.500M46 57.500A27 27 0 0 1 8 24M2.500 22.500L8.500 19V26M65 42l-6 4v-7" />
        <path d="M25 22l10 11 9-11M35 33v16M25 34h20M25 42h20" />
      </Action>
      <Action label="发帖">
        <path d="M46 8H14a5 5 0 0 0-5 5v42a5 5 0 0 0 5 5h42a5 5 0 0 0 5-5V26" />
        <path d="M60 10L29 41l-3 5 5-3L63 12z" fill="currentColor" strokeWidth="2.500" />
      </Action>
      <Action label="功能">
        <rect x="9.500" y="9.500" width="21" height="21" rx="4" />
        <rect x="9.500" y="38" width="21" height="21" rx="4" />
        <rect x="38" y="38" width="21" height="21" rx="4" />
        <rect x="39.500" y="11" width="18" height="18" rx="3" transform="rotate(45 48.500 20)" />
      </Action>
      <Action label="加自选" orange>
        <circle cx="34" cy="34" r="27" />
        <path d="M34 21v26M21 34h26" />
      </Action>
    </footer>
  );
}

function SystemNav() {
  return (
    <div className="flex h-[122px] bg-[#fcfcfc] pl-[320px] pt-[37px]">
      <svg width="44" height="50" viewBox="0 0 44 50" fill="none" stroke="#868686" strokeWidth="4" strokeLinejoin="round"><path d="M39 4v42L3 25z" /></svg>
      <svg width="50" height="50" viewBox="0 0 50 50" className="ml-[199px]" fill="none" stroke="#868686" strokeWidth="4"><circle cx="25" cy="25" r="22" /></svg>
      <svg width="44" height="50" viewBox="0 0 44 50" className="ml-[197px]" fill="none" stroke="#868686" strokeWidth="4"><rect x="2" y="4.500" width="39" height="40" rx="2" /></svg>
    </div>
  );
}

export default function App() {
  return (
    <div className="flex h-[2400px] w-[1176px] flex-col overflow-hidden bg-[#fefefe] font-['Noto_Sans_CJK_SC',sans-serif] [&>*]:shrink-0">
      <StatusBar />
      <Header />
      <Stats />
      <Notice />
      <PeriodTabs />
      <PriceLegend />
      <PriceChart />
      <TurnoverLegend />
      <TurnoverChart />
      <div className="flex h-[81px] justify-between pl-[17px] pr-[17px] pt-[10px] text-[39.6px] leading-[40px] text-[#8a8a8a]">
        <span>20250328</span>
        <span>20250815</span>
      </div>
      <Promo />
      <SectionTabs />
      <Cards />
      <BottomBar />
      <SystemNav />
    </div>
  );
}
